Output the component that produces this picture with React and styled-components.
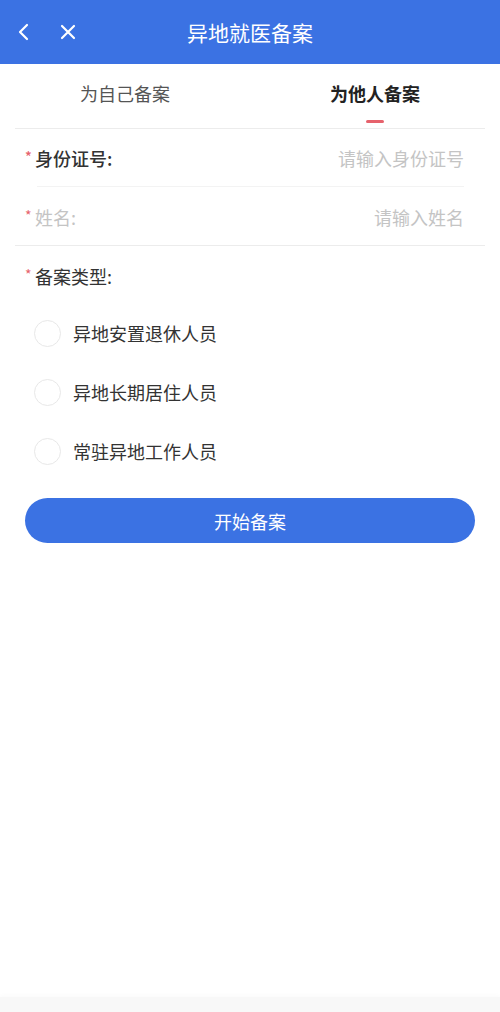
import React, { useState } from "react";
import styled, { createGlobalStyle } from "styled-components";

const Global = createGlobalStyle`
  html, body { margin: 0; padding: 0; background: #fff; }
  body { font-family: "Noto Sans CJK SC", "Noto Sans", sans-serif; }
  * { box-sizing: border-box; }
`;

const Page = styled.div`
  display: flex;
  flex-direction: column;
  min-height: 1012px;
  background: #fff;
`;

const Header = styled.header`
  height: 64px;
  background: #3b72e3;
  display: grid;
  grid-template-columns: 100px 1fr 100px;
  align-items: center;
  color: #fff;
`;

const HeaderIcons = styled.div`
  display: flex;
  align-items: center;
  gap: 26px;
  padding-left: 15px;
`;

const IconBtn = styled.span`
  display: inline-flex;
  width: 18px;
  height: 18px;
  align-items: center;
  justify-content: center;
`;

const Title = styled.h1`
  margin: 0;
  text-align: center;
  font-size: 21px;
  font-weight: 400;
`;

const Tabs = styled.nav`
  position: relative;
  display: flex;
  height: 65px;
  &::after {
    content: "";
    position: absolute;
    left: 15px;
    right: 15px;
    bottom: 0;
    height: 1px;
    background: #ececec;
  }
`;

const Tab = styled.div`
  flex: 1;
  position: relative;
  display: flex;
  justify-content: center;
  padding-top: 16px;
  font-size: 18px;
  color: ${(p) => (p.$active ? "#222" : "#555")};
  font-weight: ${(p) => (p.$active ? 700 : 400)};
  cursor: pointer;
  &::after {
    content: "";
    display: ${(p) => (p.$active ? "block" : "none")};
    position: absolute;
    left: 50%;
    bottom: 6px;
    width: 18px;
    height: 3px;
    margin-left: -9px;
    border-radius: 2px;
    background: #e6626c;
  }
`;

const Field = styled.div`
  position: relative;
  display: flex;
  align-items: center;
  justify-content: space-between;
  height: ${(p) => p.$h || 58}px;
  margin: 0 15px;
  padding: 0 21px 0 10px;
  &::after {
    content: "";
    position: absolute;
    bottom: 0;
    height: 1px;
    left: ${(p) => (p.$inset ? 22 : 0)}px;
    right: ${(p) => (p.$inset ? 21 : 0)}px;
    background: ${(p) => p.$line || "transparent"};
  }
`;

const Label = styled.label`
  font-size: 18px;
  color: ${(p) => (p.$muted ? "#c4c4c4" : "#333")};
  font-weight: ${(p) => (p.$bold ? 500 : 400)};
  display: flex;
  align-items: center;
`;

const Star = styled.span`
  color: #e6626c;
  font-size: 14px;
  width: 10px;
  align-self: flex-start;
  margin-top: 1px;
`;

const Input = styled.input`
  border: none;
  outline: none;
  background: transparent;
  text-align: right;
  font-family: inherit;
  font-size: 18px;
  width: 200px;
  color: #333;
  padding: 0;
  &::placeholder { color: #c4c4c4; }
`;

const TypeHeader = styled.div`
  display: flex;
  align-items: center;
  height: 60px;
  padding: 0 25px;
`;

const RadioList = styled.div`
  display: flex;
  flex-direction: column;
  gap: 31px;
  padding: 13px 34px 0;
`;

const RadioItem = styled.label`
  display: flex;
  align-items: center;
  gap: 12px;
  font-size: 18px;
  color: #333;
  height: 28px;
  cursor: pointer;
`;

const Circle = styled.span`
  width: 27px;
  height: 27px;
  border-radius: 50%;
  border: 1px solid ${(p) => (p.$on ? "#3b72e3" : "#e8e8e8")};
  background: ${(p) => (p.$on ? "#3b72e3" : "#fff")};
  flex: none;
`;

const Submit = styled.button`
  margin: 33px 25px 0;
  height: 45px;
  border: none;
  border-radius: 23px;
  background: #3b72e3;
  color: #fff;
  font-family: inherit;
  font-size: 18px;
  cursor: pointer;
`;

const Spacer = styled.div`
  flex: 1;
`;

const BottomBar = styled.div`
  height: 15px;
  background: #f8f8f8;
  box-shadow: 0 -2px 4px rgba(0, 0, 0, 0.02);
`;

const Chevron = () => (
  <svg width="14" height="18" viewBox="0 0 14 18" fill="none">
    <path d="M10 2 L3 9 L10 16" stroke="#fff" strokeWidth="2.2" strokeLinecap="round" strokeLinejoin="round" />
  </svg>
);

const Close = () => (
  <svg width="16" height="16" viewBox="0 0 16 16" fill="none">
    <path d="M2 2 L14 14 M14 2 L2 14" stroke="#fff" strokeWidth="2.2" strokeLinecap="round" />
  </svg>
);

const types = ["异地安置退休人员", "异地长期居住人员", "常驻异地工作人员"];

export default function App() {
  const [tab, setTab] = useState(1);
  const [sel, setSel] = useState(-1);
  return (
    <Page>
      <Global />
      <Header>
        <HeaderIcons>
          <IconBtn><Chevron /></IconBtn>
          <IconBtn><Close /></IconBtn>
        </HeaderIcons>
        <Title>异地就医备案</Title>
        <div />
      </Header>
      <Tabs>
        <Tab $active={tab === 0} onClick={() => setTab(0)}>为自己备案</Tab>
        <Tab $active={tab === 1} onClick={() => setTab(1)}>为他人备案</Tab>
      </Tabs>
      <Field $h={58} $inset $line="#f3f3f3">
        <Label $bold><Star>*</Star>身份证号:</Label>
        <Input placeholder="请输入身份证号" />
      </Field>
      <Field $h={59} $line="#ececec">
        <Label $muted><Star>*</Star>姓名:</Label>
        <Input placeholder="请输入姓名" />
      </Field>
      <TypeHeader>
        <Label><Star>*</Star>备案类型:</Label>
      </TypeHeader>
      <RadioList>
        {types.map((t, i) => (
          <RadioItem key={t} onClick={() => setSel(i)}>
            <Circle $on={sel === i} />
            {t}
          </RadioItem>
        ))}
      </RadioList>
      <Submit>开始备案</Submit>
      <Spacer />
      <BottomBar />
    </Page>
  );
}
